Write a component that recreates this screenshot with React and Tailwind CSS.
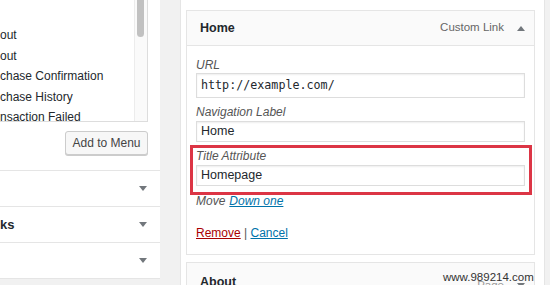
import React from "react";

const font = { fontFamily: '"Liberation Sans", Arial, sans-serif' };

function Caret({ up = false }) {
  return (
    <svg width="8" height="5" viewBox="0 0 8 5" className="shrink-0">
      {up ? (
        <path d="M0 5 L4 0 L8 5 Z" fill="#72777c" />
      ) : (
        <path d="M0 0 L8 0 L4 5 Z" fill="#72777c" />
      )}
    </svg>
  );
}

export default function App() {
  return (
    <div
      className="relative w-[550px] h-[285px] bg-[#f1f1f1] flex overflow-hidden text-[#23282d]"
      style={font}
    >
      {/* Left column */}
      <div className="w-[160px] shrink-0 flex flex-col">
        <div className="h-[170px] bg-white flex flex-col">
          <div className="relative h-[122px] w-[148px] border-r border-b border-[#ddd] bg-white">
            <div className="pt-[25px] text-[12px] leading-[20.5px]">
              <div>out</div>
              <div>out</div>
              <div>chase Confirmation</div>
              <div>chase History</div>
              <div>nsaction Failed</div>
            </div>
            <div className="absolute right-0 top-0 bottom-0 w-[13px] bg-[#fafafa] border-l border-[#ececec]">
              <div className="ml-[2px] w-[7px] h-[37px] rounded-b-[4px] bg-[#c1c1c1]" />
            </div>
          </div>
          <div className="flex justify-end pr-[12px] mt-[9px]">
            <button className="h-[24px] w-[83px] border border-[#ccc] bg-[#f7f7f7] rounded-[3px] shadow-[0_1px_0_#ccc] text-[12px] text-[#444]">
              Add to Menu
            </button>
          </div>
        </div>
        <div className="h-[36px] bg-white border-t border-[#e5e5e5] flex items-center justify-end pr-[13px]">
          <Caret />
        </div>
        <div className="h-[36px] bg-white border-t border-[#e5e5e5] flex items-center justify-between pr-[13px]">
          <span className="text-[13px] font-bold">ks</span>
          <Caret />
        </div>
        <div className="h-[37px] bg-white border-t border-b border-[#e5e5e5] flex items-center justify-end pr-[13px]">
          <Caret />
        </div>
      </div>

      {/* Gap */}
      <div className="w-[20px] shrink-0" />

      {/* Right column */}
      <div className="w-[365px] shrink-0 bg-white border-l border-r border-[#e5e5e5] pl-[5px] pr-[9px] pt-[10px]">
        <div className="border border-[#e5e5e5] bg-white">
          <div className="h-[35px] bg-[#fafafa] border-b border-[#e5e5e5] flex items-center justify-between pl-[13px] pr-[9px]">
            <span className="text-[12.5px] font-bold">Home</span>
            <div className="flex items-center gap-[13px]">
              <span className="text-[11.5px] text-[#666]">Custom Link</span>
              <Caret up />
            </div>
          </div>
          <div className="px-[9px] pt-[11px] pb-[13px]">
            <div className="text-[12px] leading-[16px] italic text-[#555]">URL</div>
            <div
              className="h-[25px] border border-[#ddd] shadow-[inset_0_1px_2px_rgba(0,0,0,0.07)] flex items-center pl-[4px] text-[11.7px]"
              style={{ fontFamily: '"DejaVu Sans Mono", "Liberation Mono", monospace' }}
            >
              http://example.com/
            </div>
            <div className="mt-[6px] text-[12px] leading-[16px] italic text-[#555]">Navigation Label</div>
            <div className="mt-[1px] h-[21px] border border-[#ddd] shadow-[inset_0_1px_2px_rgba(0,0,0,0.07)] flex items-center pl-[4px] text-[12.5px]">
              Home
            </div>
            <div className="mt-[3px] -ml-[6px] -mr-[7px] border-[3px] border-[#dc3545] pl-[3px] pr-[4px] pb-[6px]">
              <div className="text-[12px] leading-[16px] italic text-[#555]">Title Attribute</div>
              <div className="mt-[1px] h-[21px] border border-[#ddd] shadow-[inset_0_1px_2px_rgba(0,0,0,0.07)] flex items-center pl-[4px] text-[12.5px]">
                Homepage
              </div>
            </div>
            <div className="-mt-[2px] text-[12px] leading-[16px] flex gap-[4px]">
              <span className="italic text-[#555]">Move</span>
              <span className="italic text-[#0073aa] underline">Down one</span>
            </div>
            <div className="mt-[16px] text-[12px] leading-[16px]">
              <span className="text-[#a00] underline">Remove</span>
              <span className="text-[#555]"> | </span>
              <span className="text-[#0073aa] underline">Cancel</span>
            </div>
          </div>
        </div>
        <div className="mt-[7px] border border-[#e5e5e5] h-[40px] bg-[#fafafa] flex items-start justify-between pl-[13px] pr-[9px] pt-[10px]">
          <span className="text-[12.5px] font-bold">About</span>
          <div className="flex items-center gap-[13px] pt-[4px]">
            <span className="text-[11.5px] text-[#999]">Page</span>
            <Caret />
          </div>
        </div>
      </div>

      {/* watermark */}
      <div className="absolute left-[443px] top-[270px] text-[11.5px] leading-[14px] text-[#333]">
        www.989214.com
      </div>
    </div>
  );
}
